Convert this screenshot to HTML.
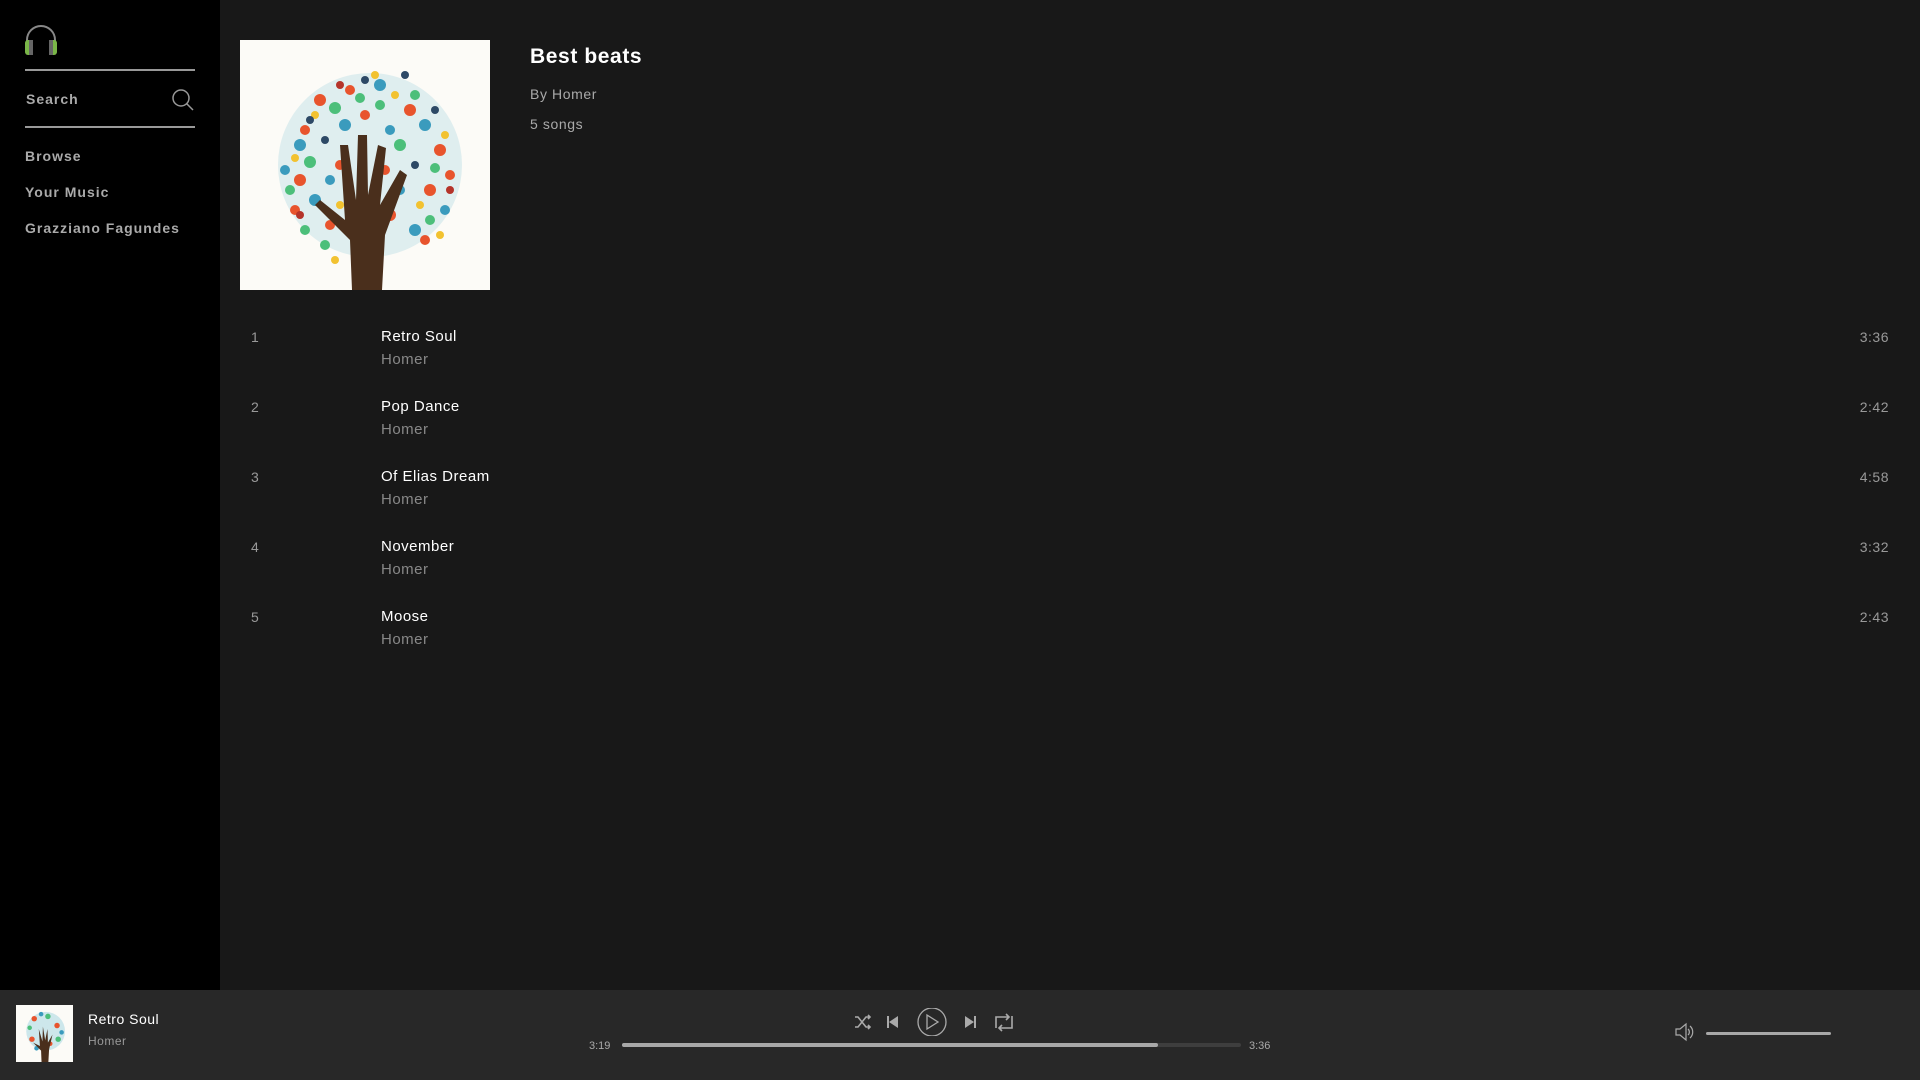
<!DOCTYPE html>
<html><head><meta charset="utf-8"><style>
*{margin:0;padding:0;box-sizing:border-box}
body{width:1920px;height:1080px;background:#181818;font-family:"Liberation Sans",Arial,sans-serif;position:relative;overflow:hidden}
.side{position:absolute;left:0;top:0;width:220px;height:990px;background:#000}
.abs{position:absolute;white-space:nowrap}
.nav{font-size:14px;font-weight:bold;color:#aaa;letter-spacing:1px;left:25px}
.line{position:absolute;left:25px;width:170px;height:2px;background:#999}
.num{left:251px;font-size:14px;color:#999}
.tt{left:381px;font-size:15px;color:#fff;letter-spacing:.5px}
.ar{left:381px;font-size:15px;color:#888;letter-spacing:.5px}
.tm{right:31px;font-size:14px;color:#999;letter-spacing:.5px}
.player{position:absolute;left:0;top:990px;width:1920px;height:90px;background:#282828}
</style></head><body>
<div class="side">
<svg class="abs" style="left:24px;top:24px" width="34" height="32" viewBox="0 0 34 32"><path d="M3 26V16a14 14 0 0 1 28 0v10" fill="none" stroke="#888" stroke-width="2"/><rect x="1" y="16" width="8" height="15" rx="3" fill="#7ab648"/><rect x="5" y="16" width="4" height="15" fill="#666"/><rect x="25" y="16" width="8" height="15" rx="3" fill="#7ab648"/><rect x="25" y="16" width="4" height="15" fill="#666"/></svg>
<div class="line" style="top:69px"></div>
<div class="abs nav" style="top:91px;left:26px">Search</div>
<svg class="abs" style="left:171px;top:88px" width="24" height="24" viewBox="0 0 24 24"><circle cx="10" cy="10" r="8" fill="none" stroke="#999" stroke-width="1.5"/><path d="M15.5 15.5L22 22" stroke="#999" stroke-width="1.5"/></svg>
<div class="line" style="top:126px"></div>
<div class="abs nav" style="top:148px">Browse</div>
<div class="abs nav" style="top:184px">Your Music</div>
<div class="abs nav" style="top:220px">Grazziano Fagundes</div>
</div>

<svg class="abs" style="left:240px;top:40px" width="250" height="250" viewBox="0 0 250 250">
<rect width="250" height="250" fill="#fcfbf7"/>
<circle cx="130" cy="125" r="92" fill="#5fb8cf" opacity=".18"/>
<g fill="#e8542d"><circle cx="80" cy="60" r="6"/><circle cx="170" cy="70" r="6"/><circle cx="60" cy="140" r="6"/><circle cx="190" cy="150" r="6"/><circle cx="110" cy="50" r="5"/><circle cx="150" cy="175" r="6"/><circle cx="90" cy="185" r="5"/><circle cx="200" cy="110" r="6"/><circle cx="125" cy="75" r="5"/><circle cx="65" cy="90" r="5"/><circle cx="185" cy="200" r="5"/><circle cx="55" cy="170" r="5"/><circle cx="145" cy="130" r="5"/><circle cx="100" cy="125" r="5"/><circle cx="210" cy="135" r="5"/></g>
<g fill="#3a9bbd"><circle cx="60" cy="105" r="6"/><circle cx="140" cy="45" r="6"/><circle cx="185" cy="85" r="6"/><circle cx="75" cy="160" r="6"/><circle cx="175" cy="190" r="6"/><circle cx="105" cy="85" r="6"/><circle cx="160" cy="150" r="5"/><circle cx="45" cy="130" r="5"/><circle cx="205" cy="170" r="5"/><circle cx="90" cy="140" r="5"/><circle cx="150" cy="90" r="5"/><circle cx="120" cy="210" r="5"/></g>
<g fill="#4cbf7a"><circle cx="95" cy="68" r="6"/><circle cx="160" cy="105" r="6"/><circle cx="70" cy="122" r="6"/><circle cx="120" cy="58" r="5"/><circle cx="195" cy="128" r="5"/><circle cx="85" cy="205" r="5"/><circle cx="175" cy="55" r="5"/><circle cx="50" cy="150" r="5"/><circle cx="190" cy="180" r="5"/><circle cx="140" cy="65" r="5"/><circle cx="65" cy="190" r="5"/></g>
<g fill="#f2c230"><circle cx="155" cy="55" r="4"/><circle cx="55" cy="118" r="4"/><circle cx="180" cy="165" r="4"/><circle cx="100" cy="165" r="4"/><circle cx="135" cy="35" r="4"/><circle cx="205" cy="95" r="4"/><circle cx="75" cy="75" r="4"/><circle cx="95" cy="220" r="4"/><circle cx="200" cy="195" r="4"/></g>
<g fill="#2d4966"><circle cx="70" cy="80" r="4"/><circle cx="175" cy="125" r="4"/><circle cx="125" cy="40" r="4"/><circle cx="165" cy="35" r="4"/><circle cx="85" cy="100" r="4"/><circle cx="195" cy="70" r="4"/></g>
<g fill="#b5342a"><circle cx="100" cy="45" r="4"/><circle cx="210" cy="150" r="4"/><circle cx="60" cy="175" r="4"/></g>
<path d="M112 250L110 200L75 165L80 160L105 180L100 105L108 105L116 160L118 95L127 95L128 155L138 105L146 108L140 165L160 130L167 135L145 195L142 250Z" fill="#4a2f1c"/>
</svg>

<div class="abs" style="left:530px;top:45px;font-size:21px;font-weight:bold;color:#fff;letter-spacing:.6px">Best beats</div>
<div class="abs" style="left:530px;top:86px;font-size:14px;color:#aaa;letter-spacing:.6px">By Homer</div>
<div class="abs" style="left:530px;top:116px;font-size:14px;color:#aaa;letter-spacing:.6px">5 songs</div>

<div class="abs num" style="top:329px">1</div><div class="abs tt" style="top:328px">Retro Soul</div><div class="abs ar" style="top:351px">Homer</div><div class="abs tm" style="top:329px">3:36</div>
<div class="abs num" style="top:399px">2</div><div class="abs tt" style="top:398px">Pop Dance</div><div class="abs ar" style="top:421px">Homer</div><div class="abs tm" style="top:399px">2:42</div>
<div class="abs num" style="top:469px">3</div><div class="abs tt" style="top:468px">Of Elias Dream</div><div class="abs ar" style="top:491px">Homer</div><div class="abs tm" style="top:469px">4:58</div>
<div class="abs num" style="top:539px">4</div><div class="abs tt" style="top:538px">November</div><div class="abs ar" style="top:561px">Homer</div><div class="abs tm" style="top:539px">3:32</div>
<div class="abs num" style="top:609px">5</div><div class="abs tt" style="top:608px">Moose</div><div class="abs ar" style="top:631px">Homer</div><div class="abs tm" style="top:609px">2:43</div>

<div class="player">
<svg class="abs" style="left:16px;top:15px" width="57" height="57" viewBox="0 0 250 250"><rect width="250" height="250" fill="#fcfbf7"/><circle cx="130" cy="115" r="85" fill="#5fb8cf" opacity=".3"/><g fill="#e8542d"><circle cx="80" cy="60" r="12"/><circle cx="180" cy="90" r="12"/><circle cx="70" cy="150" r="12"/><circle cx="150" cy="170" r="10"/></g><g fill="#4cbf7a"><circle cx="140" cy="50" r="12"/><circle cx="185" cy="150" r="12"/><circle cx="60" cy="100" r="10"/></g><g fill="#3a9bbd"><circle cx="110" cy="40" r="10"/><circle cx="200" cy="120" r="10"/><circle cx="90" cy="190" r="10"/></g><path d="M112 250L110 200L75 165L105 180L100 105L116 160L118 95L128 155L138 105L140 165L160 130L145 195L142 250Z" fill="#4a2f1c"/></svg>
<div class="abs" style="left:88px;top:21px;font-size:14px;color:#fff;letter-spacing:.5px">Retro Soul</div>
<div class="abs" style="left:88px;top:44px;font-size:12px;color:#999;letter-spacing:.5px">Homer</div>
<svg class="abs" style="left:850px;top:18px" width="170" height="28" viewBox="0 0 170 28">
<g stroke="#aaa" stroke-width="1.6" fill="none"><path d="M5 9h3l8 10h4M5 19h3l8-10h4M18 7l2 2-2 2M18 17l2 2-2 2"/></g>
<path d="M37 8h2v12h-2zM48 8v12l-9-6z" fill="#aaa"/>
<circle cx="82" cy="14" r="14" fill="none" stroke="#aaa" stroke-width="1.3"/><path d="M77 7l11 7-11 7z" fill="none" stroke="#aaa" stroke-width="1.3"/>
<path d="M124 8h2v12h-2zM115 8v12l9-6z" fill="#aaa"/>
<g stroke="#aaa" stroke-width="1.6" fill="none"><path d="M146 20v-11h12M162 8v12h-12M156 6l3 3-3 3M152 17l-3 3 3 3"/></g>
</svg>
<div class="abs" style="left:589px;top:50px;font-size:11px;color:#aaa">3:19</div>
<div class="abs" style="left:622px;top:53px;width:619px;height:4px;background:#3e3e3e;border-radius:2px"><div style="width:536px;height:4px;background:#a8a8a8;border-radius:2px"></div></div>
<div class="abs" style="left:1249px;top:50px;font-size:11px;color:#aaa">3:36</div>
<svg class="abs" style="left:1674px;top:31px" width="20" height="22" viewBox="0 0 20 22"><path d="M2 8h4l6-5v16l-6-5H2z" fill="none" stroke="#aaa" stroke-width="1.2"/><path d="M14 8a4 4 0 0 1 0 6M16 5a8 8 0 0 1 0 12" fill="none" stroke="#aaa" stroke-width="1.2"/></svg>
<div class="abs" style="left:1706px;top:42px;width:125px;height:3px;background:#a8a8a8;border-radius:2px"></div>
</div>
</body></html>
